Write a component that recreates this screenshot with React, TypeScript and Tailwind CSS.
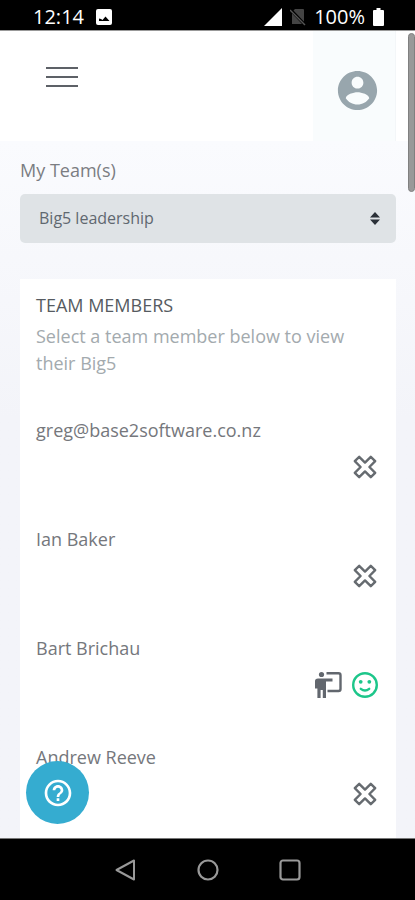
const MEMBERS = [
  { name: "greg@base2software.co.nz", leader: false, happy: false },
  { name: "Ian Baker", leader: false, happy: false },
  { name: "Bart Brichau", leader: true, happy: true },
  { name: "Andrew Reeve", leader: false, happy: false },
];

function StatusBar() {
  return (
    <div className="flex h-[30px] flex-none items-center justify-between bg-black pl-[33px] pr-[31px] pt-1 text-[20px] font-medium leading-6 text-white">
      <div className="flex items-center gap-3">
        <span>12:14</span>
        <svg width="16" height="16" viewBox="0 0 16 16">
          <rect width="16" height="16" rx="2" fill="#fff" />
          <path d="M3 12V9.500l2 .5 1.500 1 3-3.500L13.500 12z" fill="#000" />
        </svg>
      </div>
      <div className="flex items-center">
        <svg width="18" height="18" viewBox="0 0 18 18"><path d="M18 0v18H0z" fill="#fff" /></svg>
        <svg width="16" height="18" viewBox="0 0 16 18" className="ml-2">
          <path d="M5 1h8q1 0 1 1v14H2V4z" fill="#444" />
          <path d="M0 1l15 16" stroke="#000" strokeWidth="3" />
          <path d="M0 2l15 15" stroke="#555" strokeWidth="1.500" />
        </svg>
        <span className="ml-2">100%</span>
        <svg width="11" height="18" viewBox="0 0 11 18" className="ml-2"><path d="M3.500 0h4v2H10q1 0 1 1v14q0 1-1 1H1q-1 0-1-1V3q0-1 1-1h2.500z" fill="#fff" /></svg>
      </div>
    </div>
  );
}

function CrossIcon() {
  return (
    <svg width="26" height="26" viewBox="0 0 26 26" fill="none" stroke="#666b70" strokeWidth="2.400" strokeLinejoin="round">
      <path d="M7.200 2.800L13 8.600 18.800 2.800 23.200 7.200 17.400 13 23.200 18.800 18.800 23.200 13 17.400 7.200 23.200 2.800 18.800 8.600 13 2.800 7.200z" />
    </svg>
  );
}

function LeaderIcon() {
  return (
    <svg width="28" height="28" viewBox="0 0 28 28">
      <circle cx="7.500" cy="3.500" r="2.600" fill="#62676e" />
      <path d="M4 7.500h14.500v3H12V27H8.800v-8H6.600v8H3.400v-9.500H1V10q0-2.500 3-2.500z" fill="#62676e" />
      <path d="M12.500 2.300h12q2 0 2 2V18q0 2-2 2h-11" fill="none" stroke="#62676e" strokeWidth="2.400" />
    </svg>
  );
}

function SmileIcon() {
  return (
    <svg width="26" height="26" viewBox="0 0 26 26" fill="none">
      <circle cx="13" cy="13" r="11.800" stroke="#1dc68a" strokeWidth="2.400" />
      <circle cx="8.700" cy="9.800" r="1.900" fill="#1dc68a" />
      <circle cx="17.300" cy="9.800" r="1.900" fill="#1dc68a" />
      <path d="M8.800 16.800q4.200 3.600 8.400 0" stroke="#1dc68a" strokeWidth="2.400" strokeLinecap="round" />
    </svg>
  );
}

function Header() {
  return (
    <header className="flex h-[111px] flex-none justify-between border-t border-[#999] bg-white pr-[19px] shadow-[0_2px_8px_rgba(60,70,110,0.05)]">
      <button aria-label="Menu" className="ml-[46px] mt-[34px] flex h-6 w-8 flex-col justify-center gap-[7px]">
        <span className="h-0.5 w-full bg-[#5d6167]" />
        <span className="h-0.5 w-full bg-[#5d6167]" />
        <span className="h-0.5 w-full bg-[#5d6167]" />
      </button>
      <button aria-label="Account" className="flex w-[83px] items-center justify-center border-r border-[#f3f6f8] bg-[#f9fcfd] pl-1.5 pt-2">
        <svg width="47" height="47" viewBox="0 0 24 24" fill="#98a6ad">
          <path d="M12 2C6.480 2 2 6.480 2 12s4.480 10 10 10 10-4.480 10-10S17.520 2 12 2zm0 3c1.660 0 3 1.340 3 3s-1.340 3-3 3-3-1.340-3-3 1.340-3 3-3zm0 14.200c-2.500 0-4.710-1.280-6-3.220.030-1.990 4-3.080 6-3.080 1.990 0 5.970 1.090 6 3.080-1.290 1.940-3.500 3.220-6 3.220z" />
        </svg>
      </button>
    </header>
  );
}

export default function App() {
  return (
    <div className="flex h-screen flex-col overflow-hidden bg-black font-['Open_Sans','Noto_Sans',sans-serif]">
      <StatusBar />
      <div className="relative flex min-h-0 flex-1 flex-col overflow-hidden bg-[#f5f6fa]">
        <Header />
        <main className="min-h-0 flex-1 bg-gradient-to-b from-[#fafbfe] to-[#f3f4f9] to-40% pl-5 pr-[19px] pt-4">
          <label htmlFor="team" className="block text-[18px] leading-[27px] text-[#7b7d82]">My Team(s)</label>
          <div className="relative mt-2.5">
            <select id="team" defaultValue="big5" className="h-[49px] w-full appearance-none rounded-[5px] bg-[#dfe3e6] px-[19px] pb-0.5 text-[16px] font-medium text-[#5f6870]">
              <option value="big5">Big5 leadership</option>
            </select>
            <svg width="10" height="13" viewBox="0 0 10 13" fill="#2b3138" className="pointer-events-none absolute right-4 top-[18px]">
              <path d="M5 0l5 5.500H0zM5 13L0 7.500h10z" />
            </svg>
          </div>
          <section className="mt-9 bg-white px-4 pb-10 pt-[13px]">
            <h2 className="text-[18px] font-medium uppercase leading-[27px] text-[#565b61]">Team Members</h2>
            <p className="mt-1 text-[18px] leading-[27px] text-[#a3aaae]">Select a team member below to view their Big5</p>
            <ul className="mt-10">
              {MEMBERS.map((m) => (
                <li key={m.name} className="h-[109px]">
                  <div className="text-[18px] leading-[27px] text-[#75777c]">{m.name}</div>
                  <div className="mt-[9px] flex h-7 items-center justify-end gap-2.5 pr-0.5">
                    {m.leader && <LeaderIcon />}
                    {m.happy ? <SmileIcon /> : <CrossIcon />}
                  </div>
                </li>
              ))}
            </ul>
          </section>
        </main>
        <div className="absolute right-0 top-[3px] h-[159px] w-[7px] rounded-full border border-[#808080] bg-[#999]" />
        <button aria-label="Help" className="absolute bottom-[14px] left-[26px] flex size-[63px] items-center justify-center rounded-full bg-[#35acd0]">
          <svg width="32" height="32" viewBox="0 0 24 24" fill="#fff">
            <path d="M11 18h2v-2h-2v2zm1-16C6.480 2 2 6.480 2 12s4.480 10 10 10 10-4.480 10-10S17.520 2 12 2zm0 18c-4.410 0-8-3.590-8-8s3.590-8 8-8 8 3.590 8 8-3.590 8-8 8zm0-14c-2.210 0-4 1.790-4 4h2c0-1.100.900-2 2-2s2 .900 2 2c0 2-3 1.750-3 5h2c0-2.250 3-2.500 3-5 0-2.210-1.790-4-4-4z" />
          </svg>
        </button>
      </div>
      <nav className="flex h-[62px] flex-none items-center justify-center gap-[60px] border-t border-[#777] bg-black">
        <button aria-label="Back">
          <svg width="22" height="22" viewBox="0 0 22 22" fill="none" stroke="#999" strokeWidth="2" strokeLinejoin="round"><path d="M19 1.500v19L1.500 11z" /></svg>
        </button>
        <button aria-label="Home">
          <svg width="22" height="22" viewBox="0 0 22 22" fill="none" stroke="#999" strokeWidth="2.200"><circle cx="11" cy="11" r="9.500" /></svg>
        </button>
        <button aria-label="Recent apps">
          <svg width="22" height="22" viewBox="0 0 22 22" fill="none" stroke="#999" strokeWidth="2.200"><rect x="1.500" y="1.500" width="19" height="19" rx="2.500" /></svg>
        </button>
      </nav>
    </div>
  );
}
